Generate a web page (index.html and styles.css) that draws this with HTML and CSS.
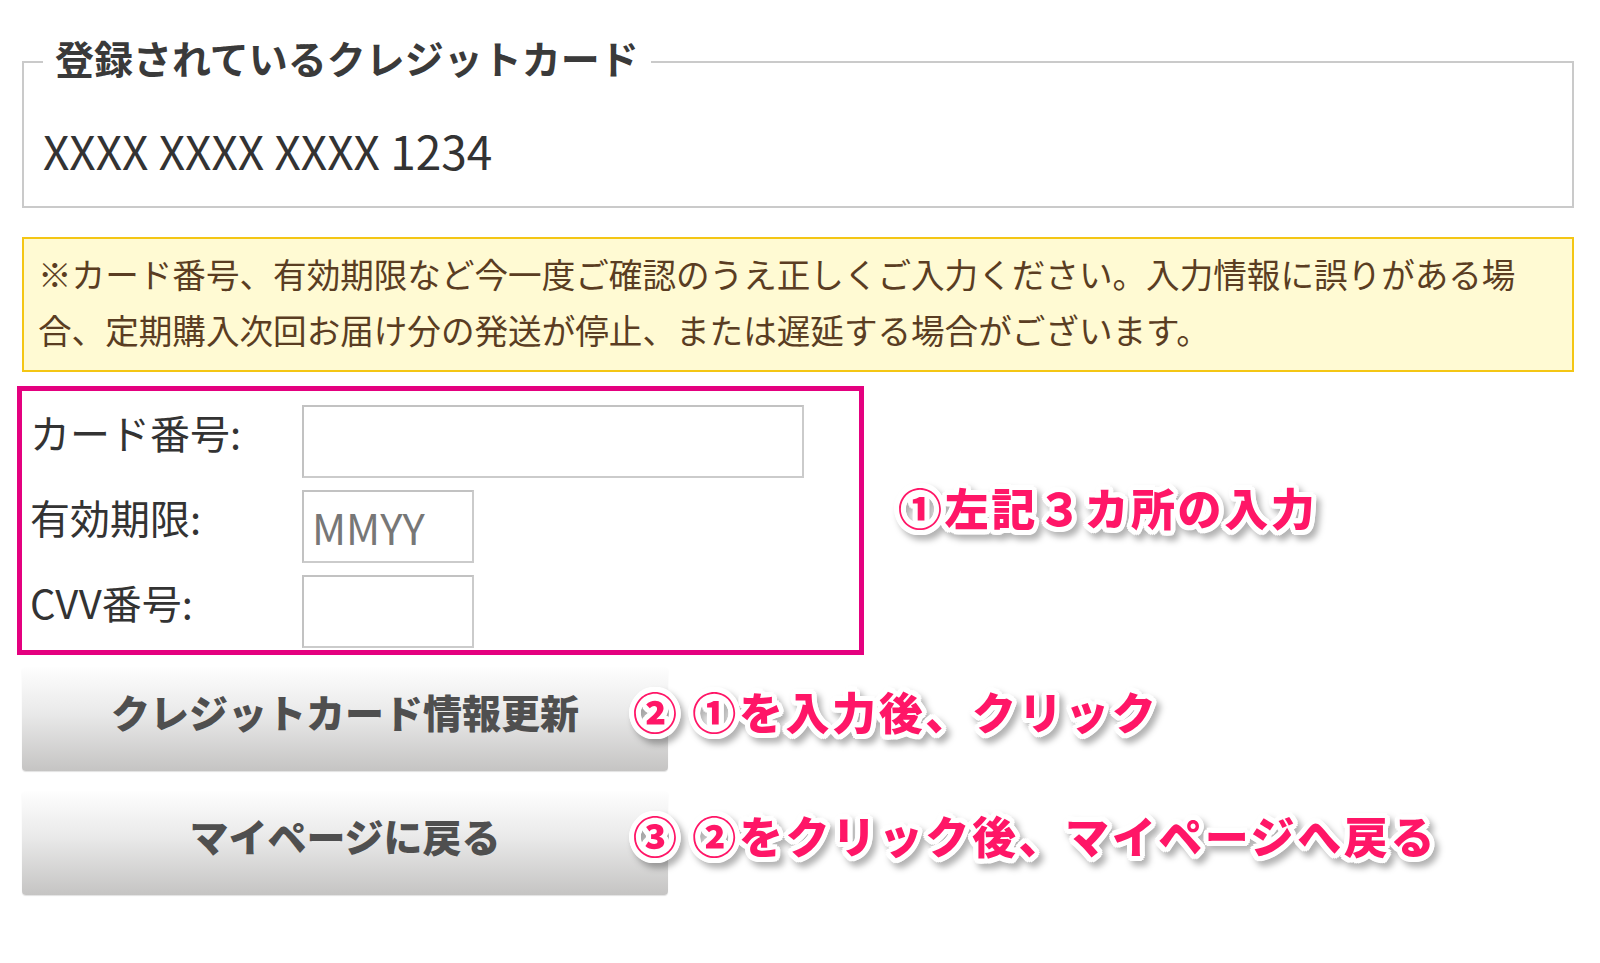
FILE: index.html
```html
<!DOCTYPE html>
<html lang="ja">
<head>
  <meta charset="UTF-8" />
  <meta name="viewport" content="width=device-width, initial-scale=1.0" />
  <title>クレジットカード情報の変更</title>
  <link rel="stylesheet" href="styles.css">
</head>
<body>
  <div class="page">
    <fieldset class="card-box">
      <legend>登録されているクレジットカード</legend>
      <p class="card-number">XXXX XXXX XXXX 1234</p>
    </fieldset>

    <div class="notice">
      ※カード番号、有効期限など今一度ご確認のうえ正しくご入力ください。入力情報に誤りがある場合、定期購入次回お届け分の発送が停止、または遅延する場合がございます。
    </div>

    <div class="form-row">
      <div class="form-box">
        <label class="field-label" for="cardNo">カード番号:</label>
        <input class="field field-wide" type="text" id="cardNo" />

        <label class="field-label" for="expire">有効期限:</label>
        <input class="field field-short" type="text" id="expire" placeholder="MMYY" />

        <label class="field-label" for="cvv">CVV番号:</label>
        <input class="field field-short" type="text" id="cvv" />
      </div>
      <p class="note note-form">①左記３カ所の入力</p>
    </div>

    <div class="action">
      <button class="btn" type="button">クレジットカード情報更新</button>
      <p class="note note-btn">② ①を入力後、クリック</p>
    </div>

    <div class="action action-back">
      <button class="btn" type="button">マイページに戻る</button>
      <p class="note note-btn">③ ②をクリック後、マイページへ戻る</p>
    </div>
  </div>
</body>
</html>
```

FILE: styles.css
```css
* {
  box-sizing: border-box;
}
body {
  margin: 0;
  background: #fff;
  color: #333;
  font-family: "Noto Sans CJK JP", "Noto Sans", sans-serif;
}
.page {
  padding: 38px 26px 40px 17px;
}

/* registered card */
.card-box {
  margin: 0 0 0 5px;
  padding: 0 19px 31px;
  border: 2px solid #cacaca;
  min-inline-size: 0;
}
.card-box legend {
  padding: 0 12px 9px;
  font-size: 39px;
  line-height: 39px;
  font-weight: bold;
  color: #3a3a3a;
}
.card-number {
  margin: 0;
  padding-top: 39px;
  font-size: 46px;
  line-height: 50px;
  color: #333;
}

/* notice */
.notice {
  margin: 29px 0 0 5px;
  padding: 7px 40px 12px 14px;
  background: #fffad3;
  border: 2px solid #f4c614;
  font-size: 33.6px;
  line-height: 56px;
  color: #5a3d22;
}

/* form */
.form-row {
  display: flex;
  align-items: center;
  gap: 34px;
  margin-top: 14px;
}
.form-box {
  width: 847px;
  display: grid;
  grid-template-columns: 272px 1fr;
  row-gap: 12px;
  padding: 14px 0 2px 8px;
  border: 5px solid #e4007f;
}
.field-label {
  font-size: 40px;
  line-height: 54px;
  color: #333;
}
.field {
  height: 73px;
  padding: 0 8px;
  border: 2px solid #cbcbcb;
  border-top-color: #c2c2c2;
  border-left-color: #c2c2c2;
  font-family: inherit;
  font-size: 42px;
  color: #333;
  background: #fff;
}
.field::placeholder {
  color: #777;
}
.field-wide {
  width: 502px;
}
.field-short {
  width: 172px;
}

/* buttons */
.action {
  display: flex;
  align-items: center;
  margin-top: 12px;
  margin-left: 5px;
}
.action-back {
  margin-top: 20px;
}
.btn {
  width: 646px;
  height: 104px;
  flex-shrink: 0;
  padding: 0 0 16px;
  border: none;
  border-radius: 4px;
  background: linear-gradient(to bottom, #fefefe 0%, #e9e9e9 45%, #c5c4c3 100%);
  box-shadow: 0 1px 1px rgba(0, 0, 0, 0.12);
  font-family: inherit;
  font-size: 39px;
  font-weight: 900;
  color: #4f4f4f;
  cursor: pointer;
}

/* red annotations */
.note {
  margin: 0;
  font-size: 44px;
  line-height: 50px;
  font-weight: 900;
  letter-spacing: 2.6px;
  white-space: nowrap;
  color: #ff1667;
  text-shadow:
    5px 0 0 #fff, -5px 0 0 #fff, 0 5px 0 #fff, 0 -5px 0 #fff,
    3.5px 3.5px 0 #fff, -3.5px 3.5px 0 #fff, 3.5px -3.5px 0 #fff, -3.5px -3.5px 0 #fff,
    4.6px 1.9px 0 #fff, -4.6px 1.9px 0 #fff, 4.6px -1.9px 0 #fff, -4.6px -1.9px 0 #fff,
    1.9px 4.6px 0 #fff, -1.9px 4.6px 0 #fff, 1.9px -4.6px 0 #fff, -1.9px -4.6px 0 #fff,
    2.5px 0 0 #fff, -2.5px 0 0 #fff, 0 2.5px 0 #fff, 0 -2.5px 0 #fff;
  filter: drop-shadow(4px 5px 3px rgba(0, 0, 0, 0.3));
}
.note-form {
  margin-bottom: 27px;
}
.note-btn {
  position: relative;
  margin-left: -35px;
  margin-bottom: 16px;
}
```
